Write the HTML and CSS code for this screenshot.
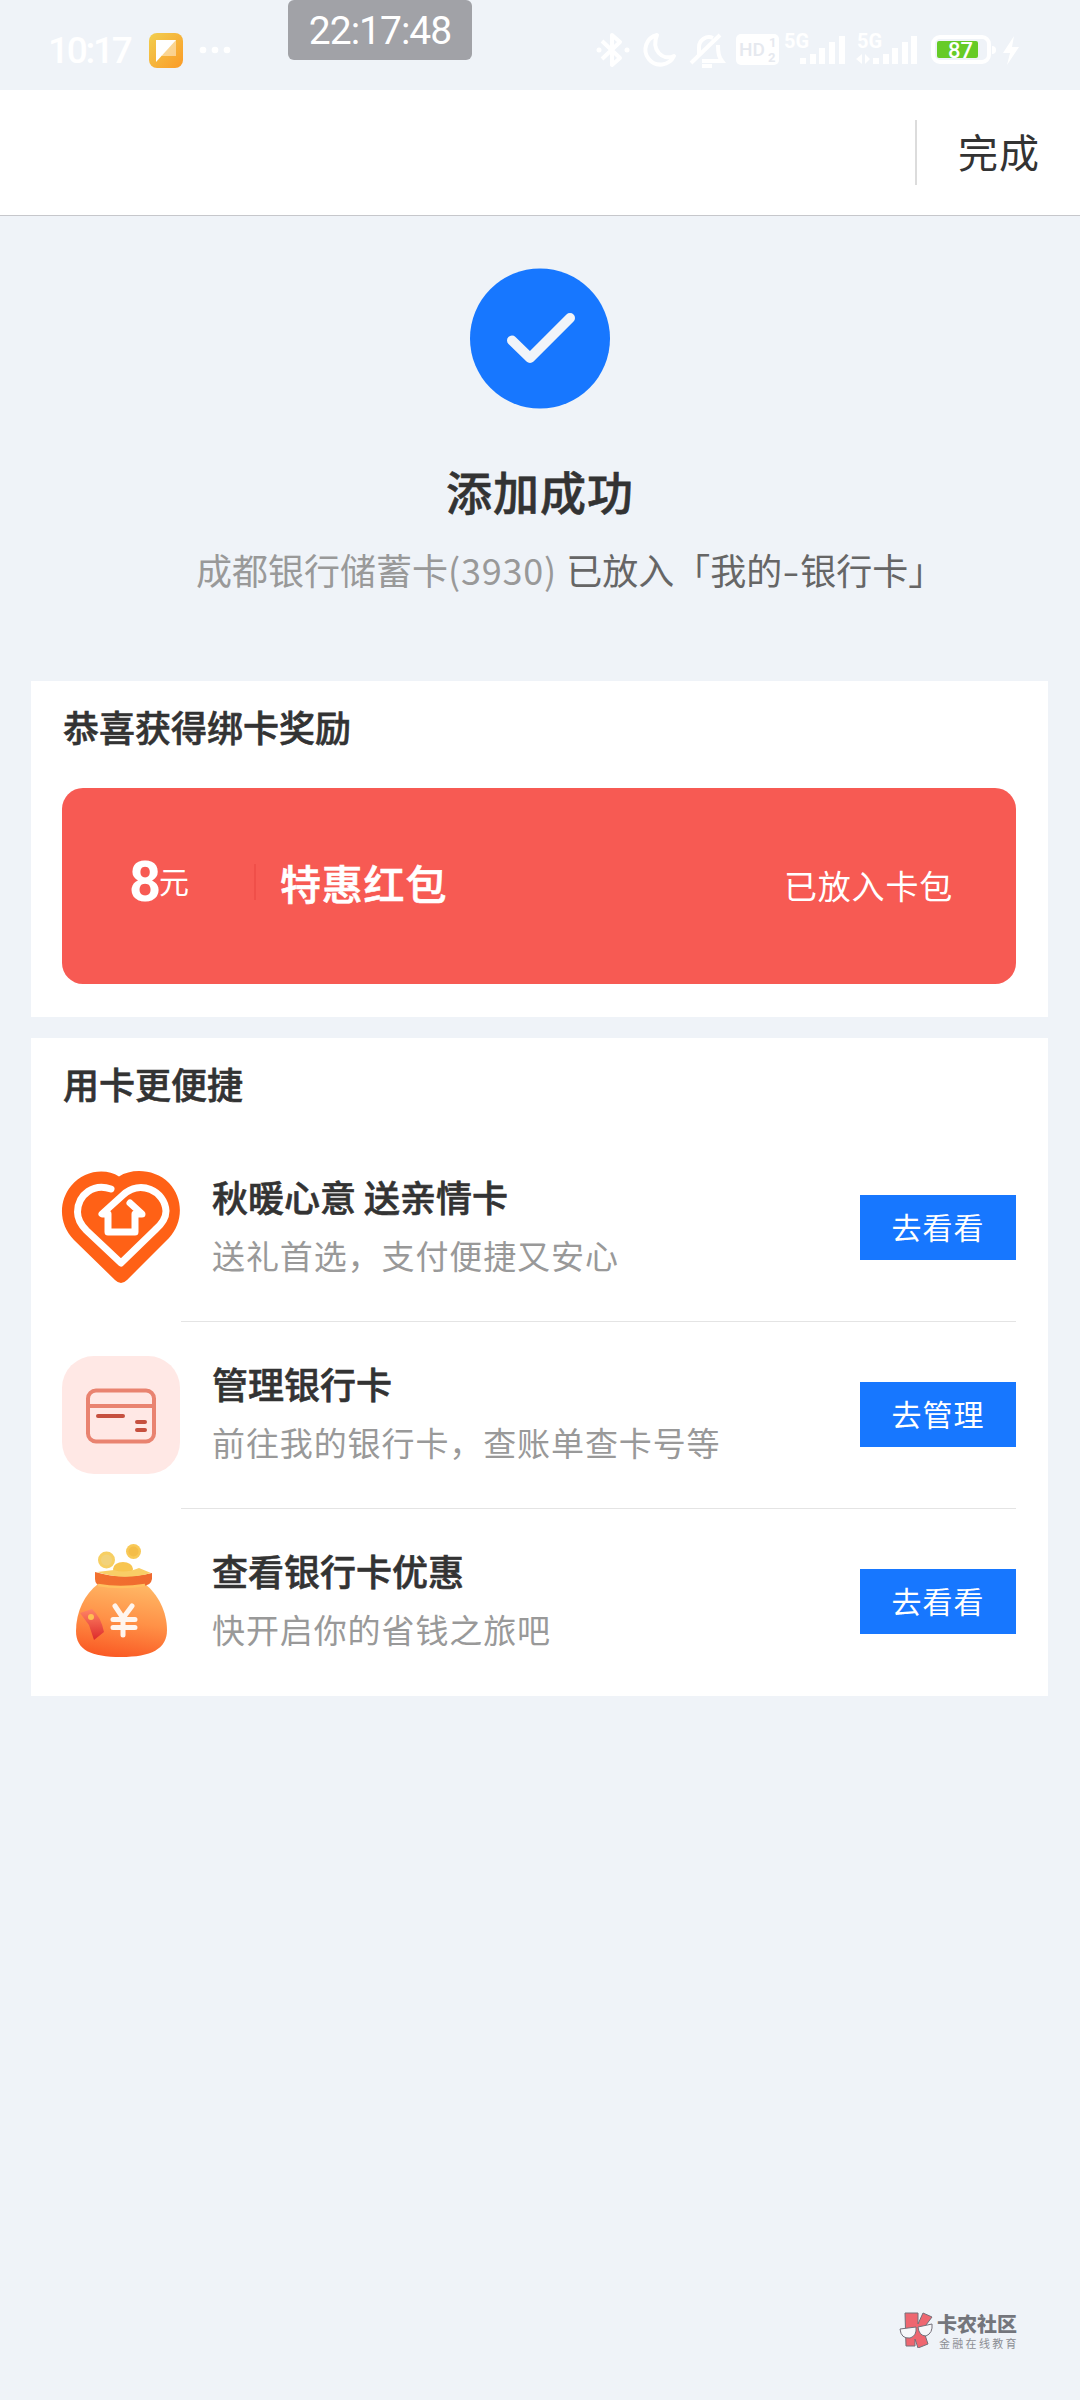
FILE: index.html
```html
<!DOCTYPE html>
<html lang="zh-CN">
<head>
<meta charset="utf-8">
<title>添加成功</title>
<link rel="stylesheet" href="styles.css">
</head>
<body>
<div class="status">
  <span class="clock">10:17</span>
  <svg class="app-icon" width="34" height="35" viewBox="0 0 34 35">
    <defs><linearGradient id="app" x1="0" y1="0" x2="1" y2="1"><stop offset="0" stop-color="#f1cf50"/><stop offset="1" stop-color="#fb9a26"/></linearGradient></defs>
    <rect width="34" height="35" rx="8" fill="url(#app)"/>
    <path d="M7 7h20v16H13z" fill="#fff" opacity=".45"/><path d="M7 7h20L7 29z" fill="#fff"/>
  </svg>
  <svg class="more" width="32" height="8" viewBox="0 0 32 8" fill="#fff"><circle cx="4" cy="4" r="3.3"/><circle cx="16" cy="4" r="3.3"/><circle cx="28" cy="4" r="3.3"/></svg>
  <svg class="sys" width="450" height="60" viewBox="585 20 450 60" fill="none" stroke="#fff" stroke-width="4">
    <path d="M602 41l18 17-8 7V35l8 7-18 17" stroke-linejoin="round"/>
    <circle cx="599" cy="50" r="2.500" fill="#fff" stroke="none"/><circle cx="627" cy="50" r="2.500" fill="#fff" stroke="none"/>
    <path d="M657 35a15 15 0 1 0 17 21c-12 5-23-6-17-21z" stroke-linejoin="round"/>
    <path d="M691 63l29-28M699 55V47a10 10 0 0 1 14-9M718 45c0 9 1 12 4 16H702M702 66h10"/>
    <rect x="736" y="34" width="43" height="31" rx="5" fill="#fff" stroke="none"/>
    <g class="bars" fill="#fff" stroke="none">
      <path d="M800 58h6v6h-6zM810 54h6v10h-6zM819 48h6v16h-6zM829 42h6v22h-6zM839 36h6v28h-6z"/>
      <path d="M873 58h6v6h-6zM883 54h6v10h-6zM892 48h6v16h-6zM902 42h6v22h-6zM911 36h6v28h-6zM862 54v10l-6-5zM865 64V54l5 5z"/>
    </g>
    <rect x="933" y="37" width="56" height="25" rx="7"/>
    <rect x="937" y="41" width="41" height="17" rx="2" fill="#66cb27" stroke="none"/>
    <path d="M992 46q4 0 4 4t-4 4z" fill="#fff" stroke="none"/>
    <path d="M1014 36l-11 17h7l-3 12 12-18h-7z" fill="#fff" stroke="none"/>
    <g class="sys-text" stroke="none">
      <text x="739" y="56" class="hd">HD</text><text x="769" y="47" class="sim">1</text><text x="768" y="62" class="sim">2</text>
      <text x="784" y="48" class="net">5G</text><text x="857" y="48" class="net">5G</text>
      <text x="948" y="57.500" class="level">87</text>
    </g>
  </svg>
  <div class="timer">22:17:48</div>
</div>
<header class="bar"><span class="done">完成</span></header>
<section class="result">
  <svg class="tick" width="140" height="141" viewBox="0 0 140 140"><circle cx="70" cy="70" r="70" fill="#1777ff"/><path d="M42 72l18 17.500 40-40" fill="none" stroke="#f0f4f9" stroke-width="10" stroke-linecap="round" stroke-linejoin="round"/></svg>
  <h1>添加成功</h1>
  <p><span class="bank">成都银行储蓄卡<span class="digits">(3930)</span></span> 已放入「我的<span class="dash">-</span>银行卡」</p>
</section>
<section class="card reward">
  <h2>恭喜获得绑卡奖励</h2>
  <div class="coupon">
    <div class="amount"><b>8</b><span>元</span></div>
    <strong>特惠红包</strong>
    <span class="state">已放入卡包</span>
  </div>
</section>
<section class="card services">
  <h2>用卡更便捷</h2>
  <div class="item">
    <svg class="icon" width="118" height="118" viewBox="0 0 118 118">
      <path d="M57 7.500C70-1 93 0 107 14c15 16 14 40 0 55L65 111q-6 6-12 0L12 71C-3 56-4 33 9 17 22 1 44-1 57 7.500z" fill="#ff6116"/>
      <path d="M49 20C32 14 16 25 15.500 43c0 7 3.500 13 9 18.500L59 94l34-33c7-6 11-12 11-19C103 22 78 10 61 26L40 45h6v18h27V45h7L68 34" fill="none" stroke="#fff" stroke-width="7" stroke-linecap="round" stroke-linejoin="round"/>
    </svg>
    <div class="body"><div class="text"><h3>秋暖心意 送亲情卡</h3><p>送礼首选，支付便捷又安心</p></div><a class="btn">去看看</a></div>
  </div>
  <div class="item">
    <svg class="icon" width="118" height="118" viewBox="0 0 118 118">
      <rect width="118" height="118" rx="32" fill="#ffe8e5"/>
      <rect x="26" y="34.500" width="66" height="51" rx="8" fill="none" stroke="#e98370" stroke-width="4"/>
      <path d="M26 50h66" stroke="#e98370" stroke-width="4"/>
      <path d="M36 60h25M75 66h8M75 74h8" stroke="#c6503f" stroke-width="4" stroke-linecap="round"/>
    </svg>
    <div class="body"><div class="text"><h3>管理银行卡</h3><p>前往我的银行卡，查账单查卡号等</p></div><a class="btn">去管理</a></div>
  </div>
  <div class="item">
    <svg class="icon" width="118" height="118" viewBox="0 0 118 118">
      <defs>
        <linearGradient id="bag" x1=".6" y1="0" x2=".4" y2="1"><stop offset="0" stop-color="#ffb765"/><stop offset=".5" stop-color="#ff9147"/><stop offset="1" stop-color="#fa5a24"/></linearGradient>
        <linearGradient id="packet" x1="0" y1="0" x2="0" y2="1"><stop offset="0" stop-color="#ff8465"/><stop offset="1" stop-color="#dc2a2b"/></linearGradient>
        <linearGradient id="neck" x1="0" y1="0" x2="1" y2="0"><stop offset="0" stop-color="#f2712f"/><stop offset="1" stop-color="#ef6a2f"/></linearGradient>
      </defs>
      <path d="M36 41C23 51 14 68 14 88c0 19 15 26 45 26s46-8 46-27c0-18-9-36-22-46z" fill="url(#bag)"/>
      <path d="M33 29q26 8 57 1v6q-1 7-10 7H41q-8 0-8-7z" fill="url(#neck)"/>
      <path d="M36 42q22 4 47 0" stroke="#ffc160" stroke-width="2.500" fill="none"/>
      <ellipse cx="61" cy="26" rx="10" ry="7" fill="#f8c550"/><path d="M35 29q27 9 54 1l-12-5q-14 6-25 2z" fill="#f9ce66"/>
      <circle cx="44.500" cy="17" r="8.500" fill="#f7cf62"/><circle cx="44.500" cy="17" r="5.500" fill="#f2d27a"/>
      <circle cx="71.500" cy="8.500" r="7.500" fill="#f8c957"/><circle cx="71.500" cy="8.500" r="5" fill="#f4bd48"/>
      <path d="M18 70l12-4q9 8 12 23l-10 8-5-15z" fill="url(#packet)"/><circle cx="29" cy="74" r="3" fill="#ffc052"/>
      <path d="M53 63l8 12 9-12M61 75v17M51 76.500h22M51 84.500h22" fill="none" stroke="#fff5ee" stroke-width="5" stroke-linecap="round" stroke-linejoin="round"/>
    </svg>
    <div class="body"><div class="text"><h3>查看银行卡优惠</h3><p>快开启你的省钱之旅吧</p></div><a class="btn">去看看</a></div>
  </div>
</section>
<footer class="brand">
  <svg width="34" height="36" viewBox="0 0 34 36" stroke="#74707a" stroke-width="1">
    <path d="M6 1h13v11l5-11 9 4-9 12 5 15-10 4-3-9v7H7z" fill="#ee6670"/>
    <path d="M1 17l16-2q1 9-6 11Q2 27 1 17zM19 15l14-3q1 9-6 12-7 0-8-9z" fill="#f6f7fa"/>
  </svg>
  <div class="wordmark"><div class="name">卡农社区</div><div class="tag">金融在线教育</div></div>
</footer>
</body>
</html>
```
FILE: styles.css
```css
* { box-sizing: border-box; }
body { margin: 0; width: 1080px; height: 2400px; background: #eff3f8; color: #333; font-family: "Noto Sans CJK SC", sans-serif; display: flex; flex-direction: column; position: relative; }
h1, h2, h3, p { margin: 0; }
h1, h2, h3, .coupon strong { font-weight: 500; -webkit-text-stroke: .6px currentColor; }
.status { height: 90px; display: flex; align-items: center; padding: 10px 45px 0 48px; position: relative; font-family: Roboto, sans-serif; }
.clock { width: 101px; color: #fff; font-size: 37px; font-weight: 500; letter-spacing: -2.3px; line-height: 80px; padding-top: 2px; }
.more { margin-left: 16px; }
.sys { margin-left: auto; }
.net { font-size: 20px; font-weight: 700; fill: #fff; }
.hd { font-size: 19px; font-weight: 500; fill: #e6e9ef; }
.sim { font-size: 13px; font-weight: 700; fill: #e6e9ef; }
.level { font-size: 22px; font-weight: 500; fill: #fff; }
.timer { position: absolute; left: 288px; top: 0; width: 184px; height: 60px; border-radius: 6px; background: #a1a2a7; color: #fff; font-size: 39px; letter-spacing: -1px; line-height: 62px; text-align: center; }
.bar { height: 126px; background: #fff; border-bottom: 1px solid #c6c7cb; display: flex; align-items: center; justify-content: flex-end; padding-right: 40px; }
.done { border-left: 2px solid #dcdcdc; height: 65px; line-height: 63px; padding-left: 41px; font-size: 40px; letter-spacing: 1px; }
.result { height: 465px; display: flex; flex-direction: column; align-items: center; padding-top: 52px; }
.result h1 { margin-top: 47px; line-height: 68px; font-size: 46px; letter-spacing: 1px; }
.result p { align-self: flex-start; margin: 20px 0 0 196px; line-height: 50px; font-size: 36px; color: #666; white-space: nowrap; }
.bank { color: #999; margin-right: 1px; }
.digits { letter-spacing: .8px; }
.dash { display: inline-block; width: 18px; text-align: center; transform: scaleX(1.35); }
.card { width: 1017px; margin-left: 31px; background: #fff; padding: 0 32px 0 31px; }
.card h2 { font-size: 36px; line-height: 52px; padding-left: 1px; }
.reward { height: 336px; padding-top: 19px; }
.coupon { margin-top: 36px; height: 196px; border-radius: 21px; background: #f75a53; color: #fff; display: flex; align-items: center; padding: 0 63px 8px 67px; }
.amount { width: 127px; height: 36px; border-right: 2px solid #f04f49; display: flex; align-items: baseline; line-height: 36px; }
.amount b { font-family: Roboto, sans-serif; font-size: 56px; width: 30px; }
.amount span { font-size: 30px; line-height: 30px; padding-bottom: 5px; align-self: flex-end; }
.coupon strong { margin-left: 24px; font-size: 41px; letter-spacing: .8px; line-height: 60px; }
.state { margin-left: auto; font-size: 33px; letter-spacing: .8px; line-height: 50px; padding-top: 6px; }
.services { margin-top: 21px; height: 658px; padding-top: 19px; }
.services h2 { height: 77px; }
.item { height: 187px; display: flex; align-items: center; }
.item:first-of-type { height: 188px; }
.icon { overflow: visible; flex: none; margin-top: -1px; }
.body { flex: 1; height: 187px; margin-left: 1px; padding: 0 0 1px 31px; display: flex; align-items: center; justify-content: space-between; border-bottom: 1px solid #e4e4e4; }
.item:last-child .body { border-bottom-color: transparent; }
.text { margin-top: -5px; }
.text h3 { font-size: 36px; line-height: 52px; }
.text p { font-size: 33px; letter-spacing: .9px; line-height: 50px; margin-top: 8px; color: #999; }
.btn { width: 156px; height: 65px; background: #1777ff; color: #fff; font-size: 30px; letter-spacing: 1px; line-height: 62px; text-align: center; }
.brand { margin-top: 616px; padding-left: 899px; display: flex; gap: 4px; color: #74767c; }
.name { font-size: 20px; font-weight: 900; line-height: 24px; white-space: nowrap; }
.tag { font-size: 11px; letter-spacing: 2.3px; line-height: 12px; padding: 1px 0 0 2px; color: #8c8e94; white-space: nowrap; }
```
